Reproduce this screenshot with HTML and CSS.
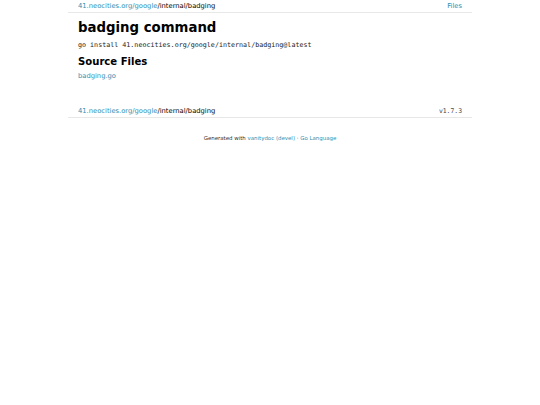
FILE: index.html
```html
<!DOCTYPE html>
<html lang="en">
<head>
    <meta charset="UTF-8">
    <meta name="viewport" content="width=device-width, initial-scale=1.0">
    <title>badging command</title>
    <link rel="stylesheet" href="styles.css">
</head>
<body>
    <div class="container">
        <div class="topbar">
            <div class="crumbs"><a href="#">41.neocities.org/google</a>/internal/badging</div>
            <a href="#">Files</a>
        </div>

        <div class="content">
            <h1>badging command</h1>
            <code class="install">go install 41.neocities.org/google/internal/badging@latest</code>

            <h2>Source Files</h2>
            <a href="#">badging.go</a>
        </div>

        <div class="bottombar">
            <div class="crumbs"><a href="#">41.neocities.org/google</a>/internal/badging</div>
            <span class="version">v1.7.3</span>
        </div>

        <div class="generated">
            Generated with <a href="#">vanitydoc (devel)</a> &middot; <a href="#">Go Language</a>
        </div>
    </div>
</body>
</html>
```

FILE: styles.css
```css
body {
    font-family: "DejaVu Sans", Verdana, sans-serif;
    font-size: 6.75px;
    margin: 0;
    background-color: white;
    color: #000;
}
a {
    color: #2f8fb3;
    text-decoration: none;
}
.container {
    width: 404px;
    margin: 0 auto;
}
.topbar, .bottombar {
    display: flex;
    justify-content: space-between;
    align-items: center;
    padding: 2px 10px 2px;
    border-bottom: 1px solid #e8e8e8;
    line-height: 8px;
}
.content {
    padding: 6px 10px 25px;
}
h1 {
    font-size: 13.3px;
    margin: 0 0 5px;
    line-height: 17px;
}
.install {
    display: block;
    font-family: "DejaVu Sans Mono", monospace;
    font-size: 6.7px;
    line-height: 9px;
    color: #222;
}
h2 {
    font-size: 10.1px;
    margin: 5px 0 4px;
    line-height: 13px;
}
.version {
    font-family: "DejaVu Sans Mono", monospace;
    font-size: 6.4px;
    color: #444;
}
.generated {
    text-align: center;
    font-size: 5.45px;
    margin-top: 17px;
    color: #333;
}
```
